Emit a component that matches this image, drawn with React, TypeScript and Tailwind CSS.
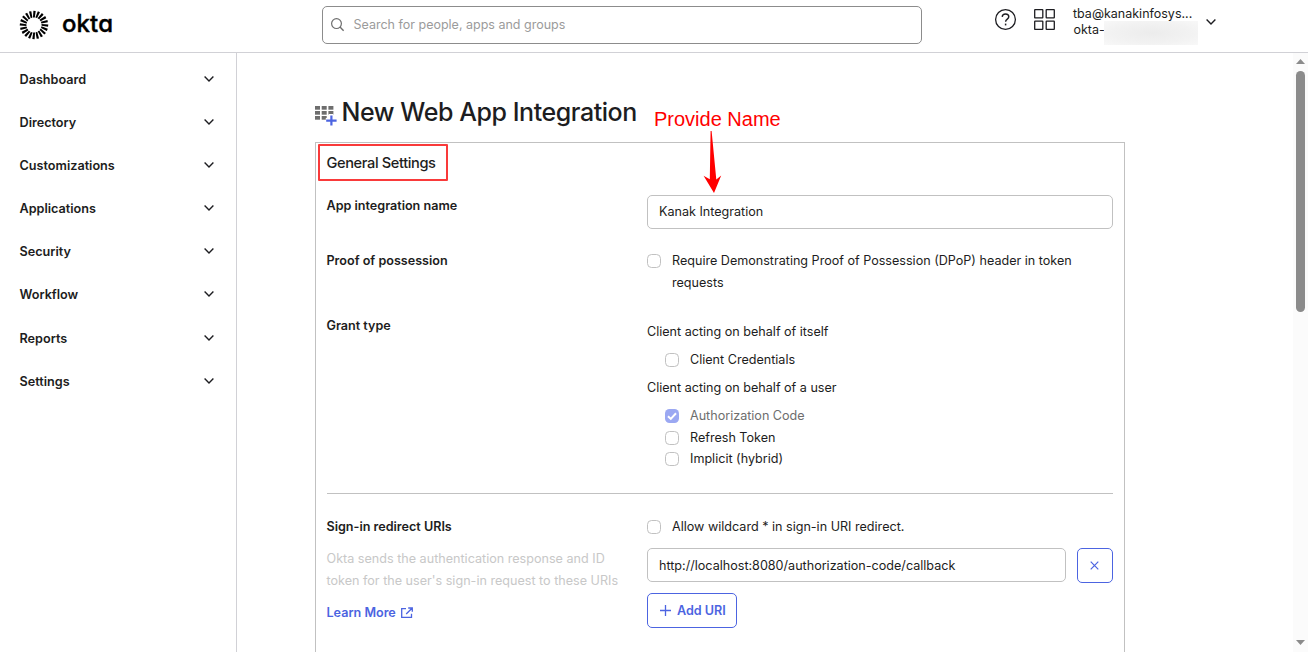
import type { ReactNode } from "react";
import clsx from "clsx";

const NAV_ITEMS = [
  "Dashboard",
  "Directory",
  "Customizations",
  "Applications",
  "Security",
  "Workflow",
  "Reports",
  "Settings",
];

const Chevron = () => (
  <svg width="12" height="12" viewBox="0 0 12 12" fill="none">
    <path d="M1.6 3.6 6 8l4.4-4.4" stroke="#1d1d21" strokeWidth="1.4" />
  </svg>
);

const OktaLogo = () => (
  <div className="flex items-center">
    <svg width="30" height="30" viewBox="-15 -15 30 30">
      {Array.from({ length: 20 }, (_, i) => (
        <path
          key={i}
          d="M-1 -7.5 L0.8 -7.6 L1.7 -14 L-0.6 -14.3 Z"
          transform={`rotate(${i * 18})`}
          fill="#000"
        />
      ))}
    </svg>
    <div className="ml-[13px] -mt-[3px] text-[24px] font-medium leading-none tracking-[0.1px] text-black [font-feature-settings:'cv11'] [-webkit-text-stroke:0.4px_#000]">
      okta
    </div>
  </div>
);

const Header = () => (
  <header className="flex h-[53px] shrink-0 items-start border-b border-[#d1d1d6]">
    <div className="w-[322px] pl-[19px] pt-[10px]">
      <OktaLogo />
    </div>
    <div className="mt-[6px] flex h-[38px] w-[600px] items-center rounded-[5px] border border-[#8c8c8c] pl-2">
      <svg width="14" height="14" viewBox="0 0 14 14" fill="none">
        <circle cx="5.5" cy="5.6" r="4.9" stroke="#6e6e6e" strokeWidth="1.2" />
        <path d="m9 9.1 3.6 3.6" stroke="#6e6e6e" strokeWidth="1.4" />
      </svg>
      <span className="ml-[8.5px] text-[12.5px] text-[#9b9b9b]">
        Search for people, apps and groups
      </span>
    </div>
    <svg
      className="ml-[72px] mt-[8px]"
      width="23"
      height="23"
      viewBox="0 0 23 23"
      fill="none"
      stroke="#1d1d21"
    >
      <circle cx="11.5" cy="11.5" r="9.9" strokeWidth="1.3" />
      <path
        d="M8.2 8.9c.1-1.9 1.5-2.9 3.3-2.9s3.3 1 3.3 2.8c0 2.4-3.2 2.2-3.2 5"
        strokeWidth="1.4"
      />
      <path d="M11.6 15.6v1.8" strokeWidth="1.5" />
    </svg>
    <svg
      className="ml-[17px] mt-[9px]"
      width="21"
      height="21"
      viewBox="0 0 21 21"
      fill="none"
      stroke="#1d1d21"
      strokeWidth="1.3"
    >
      <rect x=".7" y=".7" width="8.1" height="8.1" rx=".4" />
      <rect x="12.2" y=".7" width="8.1" height="8.1" rx=".4" />
      <rect x=".7" y="12.2" width="8.1" height="8.1" rx=".4" />
      <rect x="12.2" y="12.2" width="8.1" height="8.1" rx=".4" />
    </svg>
    <div className="ml-[18px] mt-[6px] w-[125px] text-[12.5px] leading-4 text-[#1d1d21]">
      <div className="whitespace-nowrap">tba@kanakinfosys...</div>
      <div className="flex whitespace-nowrap">
        <span className="w-[31px] shrink-0 pl-[0.5px]">okta-</span>
        <div className="-mt-px h-6 w-[94px] shrink-0 bg-[radial-gradient(ellipse_at_center,#ececec_0%,#f2f2f2_60%,#f8f8f8_100%)]" />
      </div>
    </div>
    <div className="ml-[7px] mt-[15.5px]">
      <Chevron />
    </div>
  </header>
);

const Sidebar = () => (
  <nav className="w-[237px] shrink-0 border-r border-[#d1d1d6] pt-[5.7px]">
    {NAV_ITEMS.map((item) => (
      <div
        key={item}
        className="flex h-[43.15px] items-center justify-between pl-[19.5px] pr-[21px] text-[12.65px] font-semibold text-[#1d1d21]"
      >
        {item}
        <div className="-mt-[3px]">
          <Chevron />
        </div>
      </div>
    ))}
  </nav>
);

const AppGridIcon = () => (
  <svg width="24" height="22" viewBox="0 0 24 22">
    <g fill="#6e6e6e">
      {[0, 5, 10].map((y) =>
        [0, 6.7, 13.4].map((x) =>
          x > 13 && y > 9 ? null : (
            <rect key={`${x}-${y}`} x={x} y={y + 1} width="5" height="3.7" />
          )
        )
      )}
    </g>
    <path d="M16 8.9v12M10.8 15.3h12" stroke="#fff" strokeWidth="4.4" />
    <path d="M16.4 10.6v10M11.2 15.6h10.4" stroke="#4c64e1" strokeWidth="2.2" />
  </svg>
);

const Checkbox = ({
  label,
  checked,
  disabled,
}: {
  label: string;
  checked?: boolean;
  disabled?: boolean;
}) => (
  <div className="flex items-start">
    <div
      className={clsx(
        "mt-1 flex size-[14px] shrink-0 items-center justify-center rounded-[4.5px]",
        checked ? "bg-[#9ba8f2]" : "border border-[#c1c1c1]"
      )}
    >
      {checked ? (
        <svg width="12" height="12" viewBox="0 0 12 12" fill="none">
          <path d="m2 6.2 2.8 2.7L10 3.3" stroke="#fff" strokeWidth="2" />
        </svg>
      ) : null}
    </div>
    <div className={clsx("ml-[11px]", disabled && "text-[#6e6e6e]")}>
      {label}
    </div>
  </div>
);

const Field = ({
  label,
  help,
  className,
  children,
}: {
  label: string;
  help?: ReactNode;
  className?: string;
  children: ReactNode;
}) => (
  <div className={clsx("flex items-start", className)}>
    <div className="w-[320.5px] shrink-0">
      <div className="font-semibold">{label}</div>
      {help}
    </div>
    <div className="min-w-0 flex-1">{children}</div>
  </div>
);

const TextInput = ({
  value,
  className,
}: {
  value: string;
  className?: string;
}) => (
  <div
    className={clsx(
      "flex h-[34px] flex-1 items-center rounded-[5px] border border-[#c1c1c1] px-[11px]",
      className
    )}
  >
    {value}
  </div>
);

const RedirectHelp = () => (
  <>
    <p className="mt-[10px] w-[300px] text-[12.6px] text-[#c8c8c8]">
      Okta sends the authentication response and ID token for the user's sign-in
      request to these URIs
    </p>
    <div className="mt-[10px] flex items-center font-semibold text-[#4c64e1]">
      Learn More
      <svg
        className="ml-[5px]"
        width="12"
        height="12"
        viewBox="0 0 12 12"
        fill="none"
        stroke="currentColor"
        strokeWidth="1.3"
      >
        <path d="M5 1.6H.7v8.8h9.8V6.8M7.2 1h4.1v3.8M11 1.2 5.2 7" />
      </svg>
    </div>
  </>
);

const NameCallout = () => (
  <>
    <div className="absolute left-[338px] top-[-36px] whitespace-nowrap font-['Liberation_Sans'] text-[20px] leading-6 text-[#ff0000]">
      Provide Name
    </div>
    <svg
      className="absolute left-[387px] top-[-12px]"
      width="20"
      height="64"
      viewBox="0 0 20 64"
    >
      <path
        d="M7.6 0h1l4.7 48.5 4.9-4L11 62 .6 44.8l6.2 3.5Z"
        fill="#ff0000"
      />
    </svg>
  </>
);

const Scrollbar = () => (
  <div className="flex w-[15px] shrink-0 flex-col items-center bg-[#fbfbfb]">
    <svg className="mt-[6px]" width="9" height="5" viewBox="0 0 9 5">
      <path d="M4.5 0 9 5H0Z" fill="#8b8b8b" />
    </svg>
    <div className="mt-[7px] h-[241px] w-[9px] rounded-full bg-[#8b8b8b]" />
    <svg className="mb-[7px] mt-auto" width="9" height="5" viewBox="0 0 9 5">
      <path d="M4.5 5 9 0H0Z" fill="#8b8b8b" />
    </svg>
  </div>
);

export default function App() {
  return (
    <div className="flex h-screen flex-col overflow-hidden bg-white font-['Inter',sans-serif]">
      <Header />
      <div className="flex min-h-0 flex-1">
        <Sidebar />
        <main className="flex-1 overflow-hidden pl-[78px]">
          <div className="flex h-[89px] items-start pt-[45px]">
            <div className="mt-[7px]">
              <AppGridIcon />
            </div>
            <h1 className="ml-[2.5px] -mt-px whitespace-nowrap text-[25px] font-medium leading-[30px] tracking-[-0.44px] text-[#1d1d21]">
              New Web App Integration
            </h1>
          </div>
          <section className="relative h-[600px] w-[810px] border border-[#c1c1c1] pl-[10.5px] pr-[11px] pt-[9px] text-[12.58px] leading-[22px] text-[#1d1d21]">
            <div className="absolute left-[2px] top-px h-[37px] w-[130px] rounded-[1px] border-2 border-[#f93a3a]" />
            <NameCallout />
            <h2 className="text-[14.6px] font-medium tracking-[-0.38px]">
              General Settings
            </h2>

            <Field label="App integration name" className="mt-[21px]">
              <div className="flex">
                <TextInput value="Kanak Integration" />
              </div>
            </Field>

            <Field label="Proof of possession" className="mt-[21px]">
              <Checkbox label="Require Demonstrating Proof of Possession (DPoP) header in token requests" />
            </Field>

            <Field label="Grant type" className="mt-[21px]">
              <div className="space-y-[6px] pt-[6px]">
                <div>Client acting on behalf of itself</div>
                <div className="pl-[18px]">
                  <Checkbox label="Client Credentials" />
                </div>
                <div>Client acting on behalf of a user</div>
                <div className="pl-[18px] leading-[21.6px]">
                  <Checkbox label="Authorization Code" checked disabled />
                  <Checkbox label="Refresh Token" />
                  <Checkbox label="Implicit (hybrid)" />
                </div>
              </div>
            </Field>

            <hr className="mt-[23px] border-[#c1c1c1]" />

            <Field
              label="Sign-in redirect URIs"
              className="mt-[22px]"
              help={<RedirectHelp />}
            >
              <Checkbox label="Allow wildcard * in sign-in URI redirect." />
              <div className="mt-[10px] flex">
                <TextInput
                  value="http://localhost:8080/authorization-code/callback"
                  className="pt-[2px]"
                />
                <button className="ml-[11px] flex h-[35px] w-9 items-center justify-center rounded-[5px] border border-[#4c64e1] pr-px">
                  <svg width="9" height="9" viewBox="0 0 9 9">
                    <path
                      d="m.7.7 7.6 7.6M8.3.7.7 8.3"
                      stroke="#4c64e1"
                      strokeWidth="1.2"
                    />
                  </svg>
                </button>
              </div>
              <button className="mt-[10px] flex h-[35px] w-[90px] items-center rounded-[5px] border border-[#4c64e1] pl-3 font-semibold text-[#4c64e1]">
                <svg width="11" height="11" viewBox="0 0 11 11">
                  <path
                    d="M5.5 0v11M0 5.5h11"
                    stroke="currentColor"
                    strokeWidth="1.3"
                  />
                </svg>
                <span className="ml-[6px] pt-[2px]">Add URI</span>
              </button>
            </Field>
          </section>
        </main>
        <Scrollbar />
      </div>
    </div>
  );
}
